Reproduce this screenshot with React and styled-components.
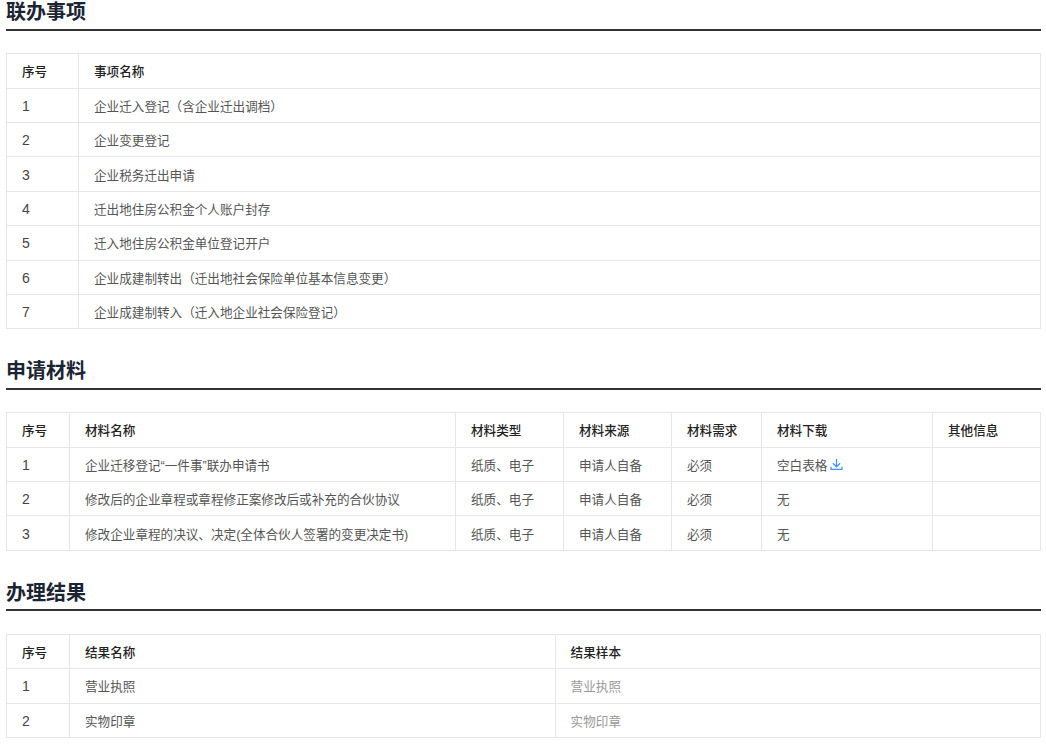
import styled, { createGlobalStyle } from "styled-components";

const GlobalStyle = createGlobalStyle`
    html, body {
        margin: 0;
        padding: 0;
        background: #fff;
        font-family: "Liberation Sans", "Noto Sans CJK SC", sans-serif;
    }
`

const DownloadIcon = () => (
    <svg width="13" height="13" viewBox="0 0 13 13" fill="none" stroke="#4096ff" strokeWidth="1.3">
        <path d="M6.5 1v7.6M2.9 5.2l3.6 3.6 3.6-3.6" />
        <path d="M1 8.8v2.6h11V8.8" />
    </svg>
)

const matters = [
    "企业迁入登记（含企业迁出调档）",
    "企业变更登记",
    "企业税务迁出申请",
    "迁出地住房公积金个人账户封存",
    "迁入地住房公积金单位登记开户",
    "企业成建制转出（迁出地社会保险单位基本信息变更）",
    "企业成建制转入（迁入地企业社会保险登记）",
]

const materials = [
    { name: "企业迁移登记“一件事”联办申请书", form: "空白表格", icon: true },
    { name: "修改后的企业章程或章程修正案修改后或补充的合伙协议", form: "无" },
    { name: "修改企业章程的决议、决定(全体合伙人签署的变更决定书)", form: "无" },
]

const results = ["营业执照", "实物印章"]

const App = () => {
    return (
        <StyledPage>
            <GlobalStyle />
            <StyledSection>
                <StyledHeading>联办事项</StyledHeading>
                <StyledTable>
                    <colgroup>
                        <col width="72" />
                        <col />
                    </colgroup>
                    <thead>
                        <tr>
                            <StyledTh>序号</StyledTh>
                            <StyledTh>事项名称</StyledTh>
                        </tr>
                    </thead>
                    <tbody>
                        {matters.map((name, i) => (
                            <tr key={name}>
                                <StyledTd><StyledIndex>{i + 1}</StyledIndex></StyledTd>
                                <StyledTd>{name}</StyledTd>
                            </tr>
                        ))}
                    </tbody>
                </StyledTable>
            </StyledSection>

            <StyledSection>
                <StyledHeading>申请材料</StyledHeading>
                <StyledTable>
                    <colgroup>
                        <col width="63" />
                        <col width="386" />
                        <col width="108" />
                        <col width="108" />
                        <col width="90" />
                        <col width="171" />
                        <col />
                    </colgroup>
                    <thead>
                        <tr>
                            <StyledTh>序号</StyledTh>
                            <StyledTh>材料名称</StyledTh>
                            <StyledTh>材料类型</StyledTh>
                            <StyledTh>材料来源</StyledTh>
                            <StyledTh>材料需求</StyledTh>
                            <StyledTh>材料下载</StyledTh>
                            <StyledTh>其他信息</StyledTh>
                        </tr>
                    </thead>
                    <tbody>
                        {materials.map((item, i) => (
                            <tr key={item.name}>
                                <StyledTd><StyledIndex>{i + 1}</StyledIndex></StyledTd>
                                <StyledTd>{item.name}</StyledTd>
                                <StyledTd>纸质、电子</StyledTd>
                                <StyledTd>申请人自备</StyledTd>
                                <StyledTd>必须</StyledTd>
                                <StyledTd>
                                    {item.form}
                                    {item.icon && <StyledIconWrap><DownloadIcon /></StyledIconWrap>}
                                </StyledTd>
                                <StyledTd></StyledTd>
                            </tr>
                        ))}
                    </tbody>
                </StyledTable>
            </StyledSection>

            <StyledSection>
                <StyledHeading>办理结果</StyledHeading>
                <StyledTable>
                    <colgroup>
                        <col width="63" />
                        <col width="485.6" />
                        <col />
                    </colgroup>
                    <thead>
                        <tr>
                            <StyledTh>序号</StyledTh>
                            <StyledTh>结果名称</StyledTh>
                            <StyledTh>结果样本</StyledTh>
                        </tr>
                    </thead>
                    <tbody>
                        {results.map((name, i) => (
                            <tr key={name}>
                                <StyledTd><StyledIndex>{i + 1}</StyledIndex></StyledTd>
                                <StyledTd>{name}</StyledTd>
                                <StyledTd className="muted">{name}</StyledTd>
                            </tr>
                        ))}
                    </tbody>
                </StyledTable>
            </StyledSection>
        </StyledPage>
    )
}

export default App;

const StyledPage = styled.div`
    padding: 0 5px 0 6px;
`

const StyledSection = styled.section`
    margin-bottom: 29.8px;
`

const StyledHeading = styled.h2`
    margin: 0 0 22.2px;
    height: 28.8px;
    line-height: 25px;
    font-size: 20px;
    font-weight: 700;
    color: #1a2433;
    border-bottom: 2px solid #333;
`

const StyledTable = styled.table`
    width: 100%;
    table-layout: fixed;
    border-collapse: collapse;
    font-size: 12.6px;
`

const StyledTh = styled.th`
    height: 33.6px;
    padding: 0 15px;
    border: 1px solid #e6e6e6;
    font-weight: 500;
    text-align: left;
    color: #222;
`

const StyledTd = styled.td`
    height: 33.4px;
    padding: 0 15px;
    border: 1px solid #e6e6e6;
    text-align: left;
    color: #555;

    &.muted {
        color: #999;
    }
`

const StyledIndex = styled.span`
    display: inline-block;
    font-size: 14px;
    line-height: 1;
    color: #444;
    transform: translateY(1px);
`

const StyledIconWrap = styled.span`
    display: inline-block;
    margin-left: 3px;
    vertical-align: -1px;
`
